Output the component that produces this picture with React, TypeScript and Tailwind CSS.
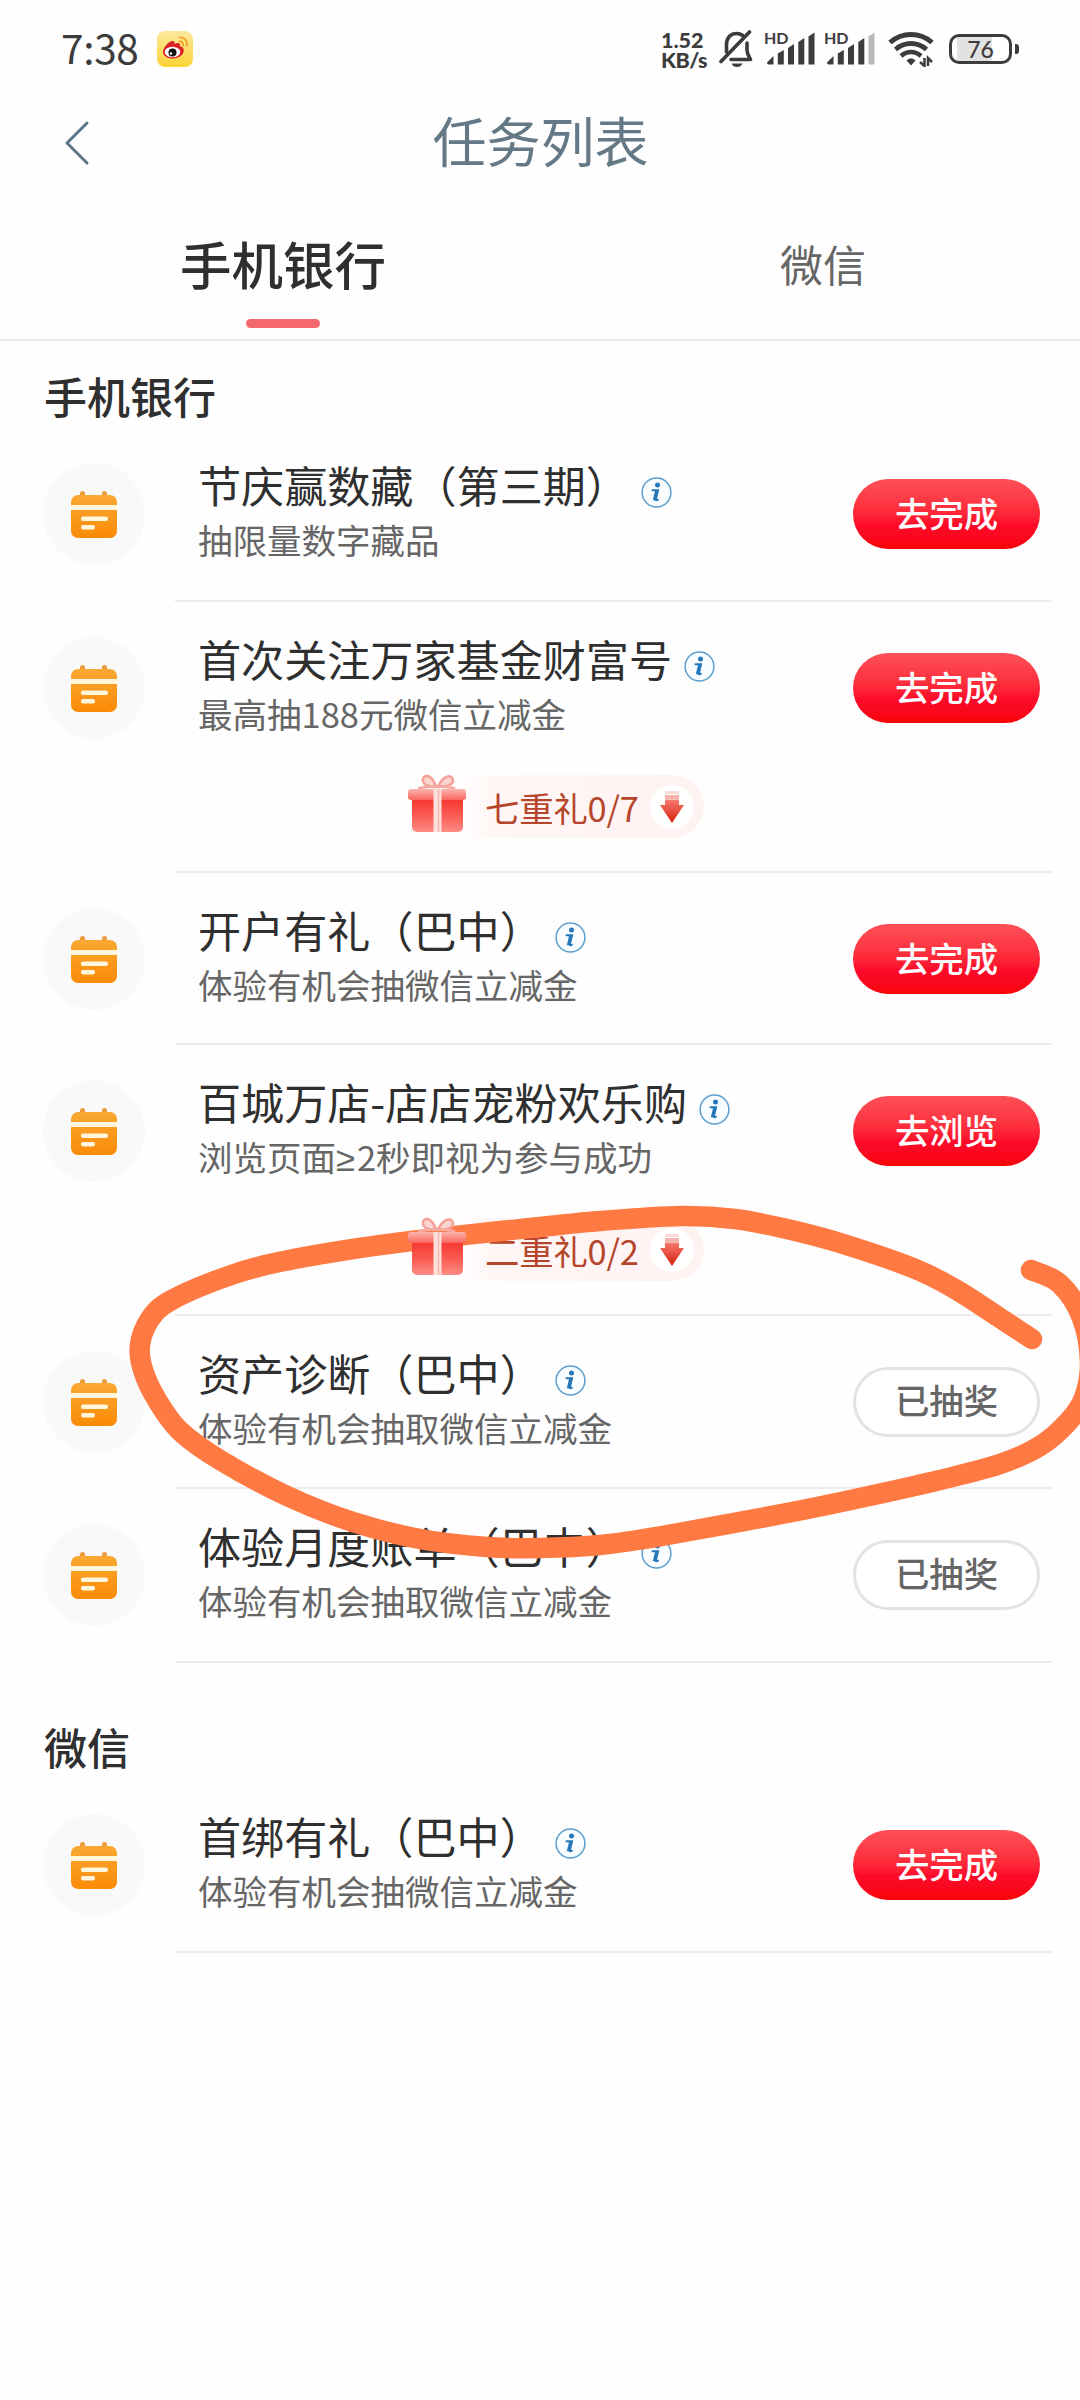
import { ReactNode } from "react";
import clsx from "clsx";

interface Tarefa {
  titulo: string;
  descricao: ReactNode;
  acao: string;
  feita?: boolean;
  presente?: string;
  altura: string;
}

const tarefasBanco: Tarefa[] = [
  {
    titulo: "节庆赢数藏（第三期）",
    descricao: "抽限量数字藏品",
    acao: "去完成",
    altura: "h-[174px]",
  },
  {
    titulo: "首次关注万家基金财富号",
    descricao: "最高抽188元微信立减金",
    acao: "去完成",
    presente: "七重礼0/7",
    altura: "h-[271px]",
  },
  {
    titulo: "开户有礼（巴中）",
    descricao: "体验有机会抽微信立减金",
    acao: "去完成",
    altura: "h-[172px]",
  },
  {
    titulo: "百城万店-店店宠粉欢乐购",
    descricao: (
      <>
        浏览页面<span className="mr-[2px] font-['Liberation_Sans']">≥</span>2秒即视为参与成功
      </>
    ),
    acao: "去浏览",
    presente: "二重礼0/2",
    altura: "h-[271px]",
  },
  {
    titulo: "资产诊断（巴中）",
    descricao: "体验有机会抽取微信立减金",
    acao: "已抽奖",
    feita: true,
    altura: "h-[173px]",
  },
  {
    titulo: "体验月度账单（巴中）",
    descricao: "体验有机会抽取微信立减金",
    acao: "已抽奖",
    feita: true,
    altura: "h-[174px]",
  },
];

const tarefasWechat: Tarefa[] = [
  {
    titulo: "首绑有礼（巴中）",
    descricao: "体验有机会抽微信立减金",
    acao: "去完成",
    altura: "h-[174px]",
  },
];

const WeiboIcon = () => (
  <svg width="36" height="36" viewBox="0 0 36 36">
    <defs>
      <linearGradient id="weibo" x1="0" y1="0" x2="0" y2="1">
        <stop offset="0" stopColor="#fce9a0" />
        <stop offset="1" stopColor="#fdd335" />
      </linearGradient>
    </defs>
    <rect width="36" height="36" rx="8" fill="url(#weibo)" />
    <path
      d="M6 21c0-4 5-10 9-11 2-.4 3 1 2.500 3 3-1.500 6-1.300 5.500 2 3 1 4.500 3 3.500 6-1 4-6 6.500-11 6.500S6 25 6 21z"
      fill="#d8232a"
    />
    <ellipse cx="15.500" cy="21" rx="7.800" ry="5.300" fill="#fff" />
    <circle cx="15.500" cy="21.500" r="4" fill="#111" />
    <circle cx="14" cy="22.500" r="1.200" fill="#fff" />
    <path
      d="M22.500 6.500c4.500-.5 8 3 7.500 8M22.500 10.500c2.500-.2 4 1.500 3.800 4"
      fill="none"
      stroke="#f3a32c"
      strokeWidth="1.800"
      strokeLinecap="round"
    />
  </svg>
);

const SinoMudo = () => (
  <svg width="36" height="38" viewBox="0 0 36 38" fill="none" stroke="#3c3c3c">
    <path
      d="M7.500 22V14.500C7.500 7.500 12 3.500 17.500 3.500c2.500 0 4.500.6 6.200 2M28 13v7c0 4 1.500 6 3.500 9.500H12"
      strokeWidth="3.600"
      strokeLinecap="round"
      strokeLinejoin="round"
    />
    <path d="M2 31.500 30.500 2" strokeWidth="3.600" strokeLinecap="round" />
    <path d="M12.500 33.500h11c-1 2.500-3 3.500-5.500 3.500s-4.500-1-5.500-3.500z" fill="#3c3c3c" stroke="none" />
  </svg>
);

const Sinal = ({ fraco }: { fraco?: boolean }) => (
  <div className="relative h-[36px] w-[50px]">
    <span className="absolute -top-[2px] -left-px font-['Lato'] text-[16px] leading-[18px] font-bold">
      HD
    </span>
    <svg width="50" height="36" viewBox="0 0 50 36" fill="#3c3c3c">
      <path d="M2 31.500 8.500 25v8.500h-5a2 2 0 0 1-1.500-2z" />
      <path d="M12.800 22.500 18.800 19v14.500h-6z" />
      <path d="M23 17 29 13v20.500h-6z" />
      <path d="M33.300 11 39.300 7v26.500h-6z" />
      <path d="M43.500 5.500 49.500 1.500v32h-6z" fill={fraco ? "#b9b9b9" : "#3c3c3c"} />
    </svg>
  </div>
);

const Wifi = () => (
  <svg width="46" height="36" viewBox="0 0 46 36" fill="none" stroke="#3c3c3c">
    <path d="M2 11.500C14 .8 32 .8 44 11.500" strokeWidth="5" />
    <path d="M7.500 18.500c9-8 22-8 31 0" strokeWidth="4.800" />
    <path d="M13 25c6-5.300 14-5.300 20 0" strokeWidth="4.500" />
    <path d="M18.500 29.500c3-2.600 6-2.600 9 0L23 34.500z" fill="#3c3c3c" stroke="none" />
    <path d="M36.500 27v8l-4.500-4M40 35v-8l4 4" strokeWidth="2.500" />
  </svg>
);

const BarraStatus = () => (
  <div className="flex h-[98px] items-center justify-between pr-[61px] pl-[61px] text-[#3c3c3c]">
    <div className="flex items-center gap-[17px]">
      <span className="-mt-[4px] w-[79px] text-[40.500px] leading-[40px] tracking-[-0.3px]">
        7:38
      </span>
      <WeiboIcon />
    </div>
    <div className="flex items-center">
      <div className="mr-[-2px] w-[60px] pt-[2px] font-['Lato'] text-[21.500px] leading-[20px] font-black">
        <div>1.52</div>
        <div className="tracking-[-0.5px] whitespace-nowrap">KB/s</div>
      </div>
      <SinoMudo />
      <div className="ml-[10px]">
        <Sinal />
      </div>
      <div className="ml-[10px]">
        <Sinal fraco />
      </div>
      <div className="ml-[13px]">
        <Wifi />
      </div>
      <div className="ml-[15px] flex items-center gap-[3px]">
        <div className="flex h-[30px] w-[63px] items-center justify-center rounded-[10px] border-[3px] border-[#3c3c3c] bg-[linear-gradient(90deg,#fff_8%,#e2e2e2_8%,#e2e2e2_70%,#fff_70%)] font-['Lato'] text-[23px] leading-none font-medium">
          76
        </div>
        <div className="h-[10px] w-[4px] rounded-r-[3px] bg-[#3c3c3c]" />
      </div>
    </div>
  </div>
);

const IconeCalendario = () => (
  <div className="flex h-[102px] w-[102px] items-center justify-center rounded-full bg-[#f9f9f9]">
    <svg width="48" height="48" viewBox="0 0 48 48">
      <defs>
        <linearGradient id="calendario" x1="0" y1="0" x2="0" y2="1">
          <stop offset="0" stopColor="#f8a933" />
          <stop offset="1" stopColor="#fb8a07" />
        </linearGradient>
      </defs>
      <rect x="10" y="1" width="5" height="9" rx="2.500" fill="#ee9a3a" />
      <rect x="32" y="1" width="5" height="9" rx="2.500" fill="#ee9a3a" />
      <rect x="1" y="5" width="46" height="43" rx="7" fill="url(#calendario)" />
      <rect x="1" y="15" width="46" height="5" fill="#fff6dc" />
      <rect x="11" y="26.500" width="27" height="4.500" rx="2" fill="#fff6dc" />
      <rect x="11" y="35" width="14" height="4.500" rx="2" fill="#fff6dc" />
    </svg>
  </div>
);

const IconeInfo = () => (
  <svg width="31" height="31" viewBox="0 0 31 31">
    <circle cx="15.500" cy="15.500" r="14.400" fill="#fafdff" stroke="#5b9fcd" strokeWidth="1.500" />
    <circle cx="16.500" cy="8" r="2.500" fill="#2478b9" />
    <path
      d="M11.500 13.200h5.500l-2.200 9.200c-.2 1 .6 1 2.200.3"
      fill="none"
      stroke="#2478b9"
      strokeWidth="2"
      strokeLinecap="round"
    />
    <path d="M14.200 13.200h3.500l-2.500 10h-3.400z" fill="#2478b9" />
  </svg>
);

const CaixaPresente = () => (
  <svg width="60" height="60" viewBox="0 0 60 60">
    <defs>
      <linearGradient id="caixa" x1="0" y1="0" x2="0" y2="1">
        <stop offset="0" stopColor="#f4382f" />
        <stop offset="0.500" stopColor="#fb5a52" />
        <stop offset="1" stopColor="#fb8d86" />
      </linearGradient>
      <linearGradient id="tampa" x1="0" y1="0" x2="0" y2="1">
        <stop offset="0" stopColor="#fcb4ae" />
        <stop offset="1" stopColor="#f9665f" />
      </linearGradient>
    </defs>
    <path
      d="M29 14C22 14 15 12 16 6c1-5 9-5 13 8zM31 14c7 0 16-2 15-7-1-6-10-5-15 7z"
      fill="#fbd5d0"
      stroke="#f5a29b"
      strokeWidth="2.600"
    />
    <path d="M29 13 12 15M31 13l16 2" stroke="#f7aaa4" strokeWidth="2.500" strokeLinecap="round" />
    <path d="M5 26h51v28a5 5 0 0 1-5 5H10a5 5 0 0 1-5-5z" fill="url(#caixa)" />
    <rect x="1" y="16" width="58" height="11" rx="3" fill="url(#tampa)" />
    <rect x="26.500" y="16" width="8" height="43" fill="#fde0dc" />
    <path d="M31.500 16v43" stroke="#f6b9b3" strokeWidth="1.500" />
  </svg>
);

const SetaBaixo = () => (
  <div className="flex h-[44px] w-[44px] items-center justify-center rounded-full bg-white">
    <svg width="24" height="32" viewBox="0 0 24 32">
      <defs>
        <linearGradient id="seta" x1="0" y1="0" x2="0" y2="1">
          <stop offset="0" stopColor="#f47a6d" />
          <stop offset="1" stopColor="#d61f10" />
        </linearGradient>
      </defs>
      <rect x="5" y="0" width="14" height="3" fill="#fadad6" />
      <rect x="5" y="4" width="14" height="4" fill="#f7b4ad" />
      <path d="M5 8.500h14V14h5L12 32 0 14h5z" fill="url(#seta)" />
    </svg>
  </div>
);

const BotaoPresente = ({ texto }: { texto: string }) => (
  <div className="mt-[33px] ml-[407px] flex h-[66px] items-end">
    <div className="z-[1] mb-[5px]">
      <CaixaPresente />
    </div>
    <div className="-ml-[14px] flex h-[63px] w-[251px] items-center rounded-r-full bg-[linear-gradient(90deg,#fff_0%,#fff6f5_16%,#fff3f2_100%)] pl-[32px]">
      <span className="w-[165px] text-[34.400px] leading-[44px] tracking-[-0.2px] whitespace-nowrap text-[#b5452b]">
        {texto}
      </span>
      <SetaBaixo />
    </div>
  </div>
);

const ItemTarefa = ({ tarefa }: { tarefa: Tarefa }) => (
  <div className={clsx("flex flex-col pt-[35px]", tarefa.altura)}>
    <div className="flex h-[102px] items-center pr-[40px] pl-[43px]">
      <IconeCalendario />
      <div className="-mt-[9px] ml-[54px] flex grow flex-col">
        <div className="flex h-[56px] items-center gap-[12px]">
          <span className="-ml-px text-[43.100px] leading-[56px] whitespace-nowrap text-[#2f2f2f]">
            {tarefa.titulo}
          </span>
          <div className="mt-[17px]">
            <IconeInfo />
          </div>
        </div>
        <span className="-ml-px h-[52px] text-[34.500px] leading-[55px] whitespace-nowrap text-[#666666]">
          {tarefa.descricao}
        </span>
      </div>
      <button
        className={clsx(
          "h-[70px] w-[187px] shrink-0 rounded-full pb-[5px] text-[34.400px] font-medium",
          tarefa.feita
            ? "-mt-[1px] border-[3px] border-[#e3e3e3] bg-white leading-[58px] text-[#666666]"
            : "bg-linear-to-b from-[#fd4f58] via-[#fd0a2b] via-65% to-[#f70505] leading-[60px] text-white"
        )}
      >
        {tarefa.acao}
      </button>
    </div>
    {tarefa.presente && <BotaoPresente texto={tarefa.presente} />}
    <div className="mt-auto mr-[28px] ml-[175px] h-[2px] bg-[#ededed]" />
  </div>
);

// traço feito à mão por cima da lista
const pontos = [
  [1032, 1339], [1000, 1318], [955, 1289], [913, 1268], [840, 1243], [787, 1229], [735, 1219],
  [681, 1216], [600, 1221], [540, 1227], [437, 1238], [353, 1249], [270, 1264], [220, 1279],
  [170, 1301], [150, 1319], [140, 1345], [143, 1370], [157, 1400], [180, 1431], [220, 1460],
  [287, 1496], [353, 1522], [420, 1539], [487, 1547], [540, 1548], [600, 1545], [662, 1536],
  [787, 1513], [860, 1498], [940, 1480], [1000, 1464], [1040, 1446], [1068, 1422], [1084, 1398],
  [1090, 1362], [1082, 1318], [1060, 1284], [1031, 1270],
];

const suavizar = (p: number[][]) => {
  let d = `M${p[0][0]} ${p[0][1]}`;
  for (let i = 0; i < p.length - 1; i++) {
    const a = p[i - 1] || p[i];
    const b = p[i];
    const c = p[i + 1];
    const e = p[i + 2] || c;
    d += `C${b[0] + (c[0] - a[0]) / 6} ${b[1] + (c[1] - a[1]) / 6} ${c[0] - (e[0] - b[0]) / 6} ${
      c[1] - (e[1] - b[1]) / 6
    } ${c[0]} ${c[1]}`;
  }
  return d;
};

const App: React.FC = () => {
  return (
    <div className="relative h-[2400px] w-[1080px] overflow-hidden bg-[#fefefe] font-['Noto_Sans_CJK_SC',sans-serif]">
      <BarraStatus />

      <header className="flex h-[90px] items-center pl-[63px]">
        <svg width="28" height="48" viewBox="0 0 28 48">
          <path
            d="M24 4 4 24l20 20"
            fill="none"
            stroke="#5d7685"
            strokeWidth="3"
            strokeLinecap="round"
            strokeLinejoin="round"
          />
        </svg>
        <h1 className="-mt-[7px] grow pr-[90px] text-center text-[54px] leading-[80px] text-[#647985]">
          任务列表
        </h1>
      </header>

      <nav className="flex h-[153px] border-b-2 border-[#ebebeb]">
        <div className="flex w-[566px] flex-col items-center pt-[39px]">
          <span className="text-[51.500px] leading-[72px] font-medium text-[#2f2f2f]">手机银行</span>
          <div className="mt-[20px] h-[9px] w-[74px] rounded-full bg-[#f5686f]" />
        </div>
        <div className="flex grow justify-center pt-[39px]">
          <span className="text-[43px] leading-[72px] text-[#666666]">微信</span>
        </div>
      </nav>

      <h2 className="mt-[24px] mb-[3px] pl-[44px] text-[43px] leading-[60px] font-medium text-[#2f2f2f]">
        手机银行
      </h2>
      {tarefasBanco.map((tarefa, index) => (
        <ItemTarefa key={index} tarefa={tarefa} />
      ))}

      <h2 className="mt-[53px] mb-[3px] pl-[44px] text-[43px] leading-[60px] font-medium text-[#2f2f2f]">
        微信
      </h2>
      {tarefasWechat.map((tarefa, index) => (
        <ItemTarefa key={index} tarefa={tarefa} />
      ))}

      <svg className="pointer-events-none absolute top-0 left-0" width="1080" height="2400">
        <path
          d={suavizar(pontos)}
          fill="none"
          stroke="#ff7943"
          strokeWidth="20.500"
          strokeLinecap="round"
          strokeLinejoin="round"
        />
      </svg>
    </div>
  );
};

export default App;
